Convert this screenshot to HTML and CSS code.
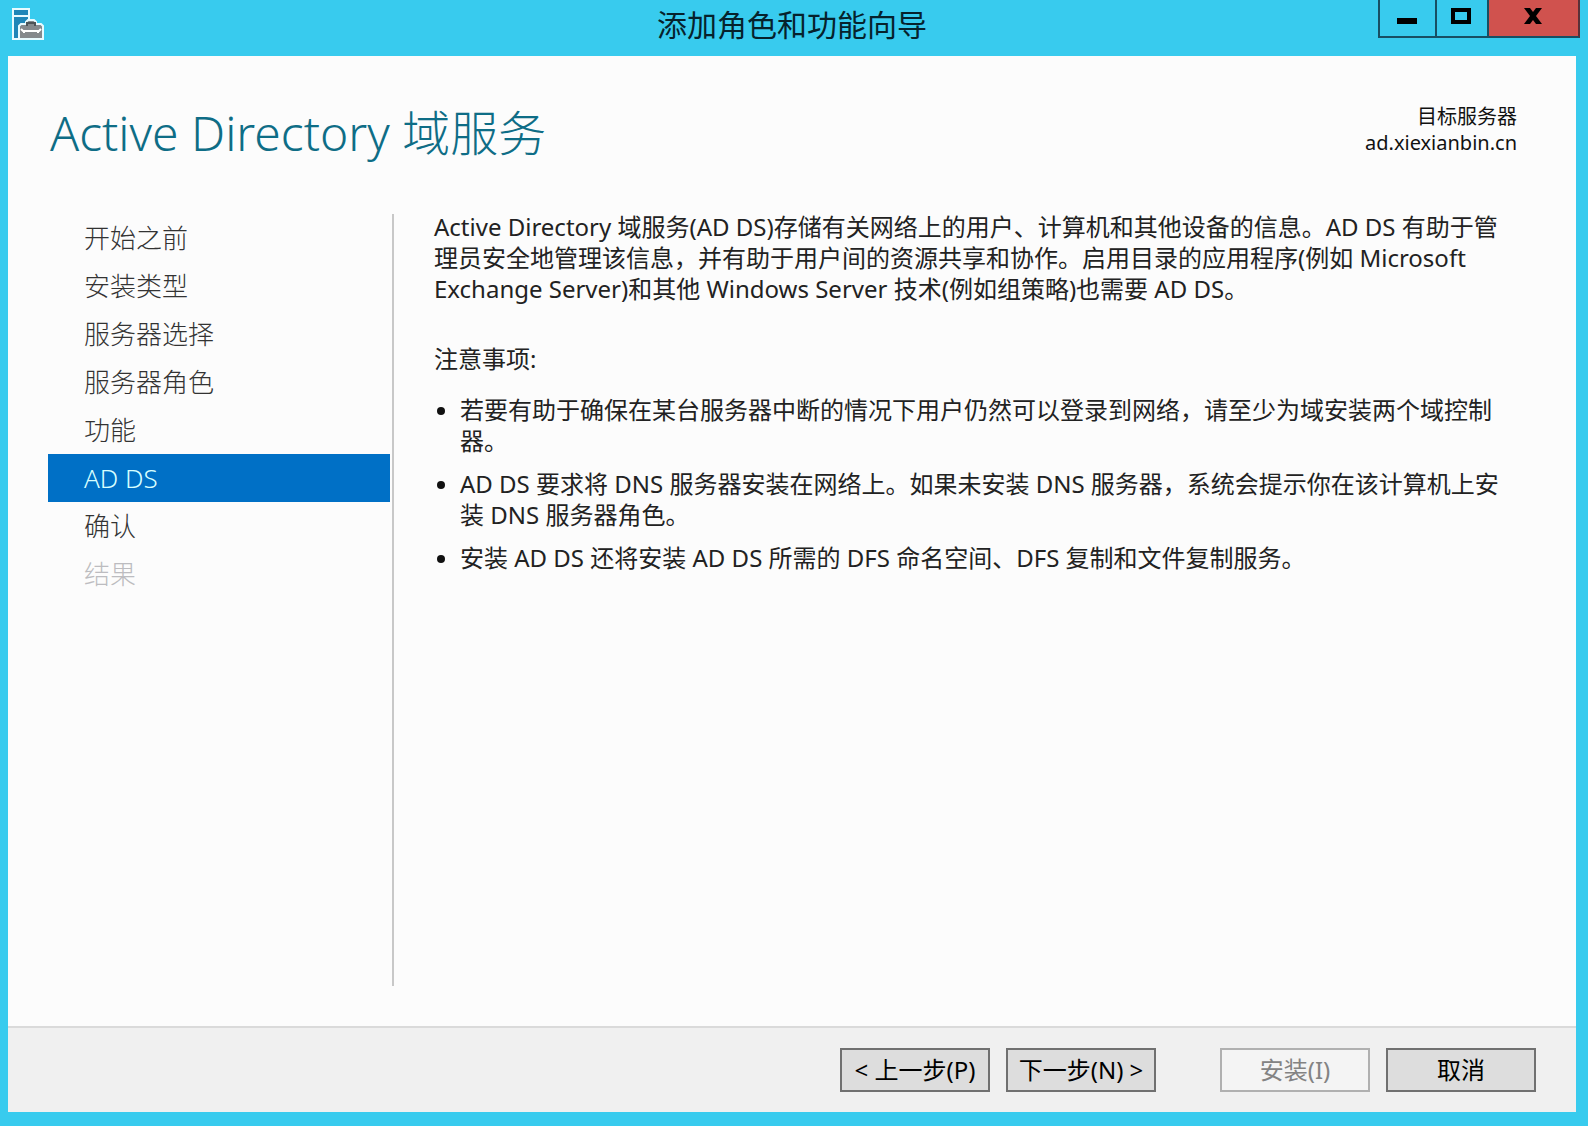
FILE: index.html
```html
<!DOCTYPE html>
<html lang="zh-CN">
<head>
    <meta charset="UTF-8">
    <meta name="viewport" content="width=device-width, initial-scale=1.0">
    <title>添加角色和功能向导</title>
    <link rel="stylesheet" href="styles.css">
</head>
<body>
    <div class="window">
        <header class="titlebar">
            <svg class="app-icon" width="32" height="32" viewBox="0 0 32 32">
                <path d="M1 1H17V31H1Z" fill="#1f86b8"/>
                <path d="M17 14V1H1V31H9M1 8H17" fill="none" stroke="#e8fbff" stroke-width="2"/>
                <path d="M7 31V18L9 16H14V14L16 12H22L24 14V16H29L31 18V31Z" fill="#85898c" stroke="#e8fbff" stroke-width="2"/>
                <path d="M15 18V15H23V18" fill="none" stroke="#4d5356" stroke-width="2"/>
                <path d="M9 21L11 23H27L29 21M12 23V25M26 23V25" fill="none" stroke="#fff" stroke-width="2"/>
            </svg>
            <div class="title">添加角色和功能向导</div>
            <div class="window-buttons">
                <button class="win-btn minimize" aria-label="最小化">
                    <svg width="20" height="16" viewBox="0 0 20 16"><path d="M0 10H20V16H0Z"/></svg>
                </button>
                <button class="win-btn maximize" aria-label="最大化">
                    <svg width="20" height="16" viewBox="0 0 20 16"><path d="M0 0H20V16H0ZM4 4V12H16V4Z" fill-rule="evenodd"/></svg>
                </button>
                <button class="win-btn close" aria-label="关闭">
                    <svg width="18" height="16" viewBox="0 0 18 16"><path d="M0 0H6L9 4L12 0H18L12 8L18 16H12L9 12L6 16H0L6 8Z"/></svg>
                </button>
            </div>
        </header>

        <main class="page">
            <div class="page-header">
                <h1>Active Directory 域服务</h1>
                <div class="target">
                    <div>目标服务器</div>
                    <div>ad.xiexianbin.cn</div>
                </div>
            </div>

            <div class="page-body">
                <nav class="steps">
                    <a class="step" href="#">开始之前</a>
                    <a class="step" href="#">安装类型</a>
                    <a class="step" href="#">服务器选择</a>
                    <a class="step" href="#">服务器角色</a>
                    <a class="step" href="#">功能</a>
                    <a class="step selected" href="#">AD DS</a>
                    <a class="step" href="#">确认</a>
                    <a class="step disabled">结果</a>
                </nav>

                <section class="content">
                    <p>Active Directory 域服务(AD DS)存储有关网络上的用户、计算机和其他设备的信息。AD DS 有助于管理员安全地管理该信息，并有助于用户间的资源共享和协作。启用目录的应用程序(例如 Microsoft Exchange Server)和其他 Windows Server 技术(例如组策略)也需要 AD DS。</p>
                    <h2>注意事项:</h2>
                    <ul>
                        <li>若要有助于确保在某台服务器中断的情况下用户仍然可以登录到网络，请至少为域安装两个域控制器。</li>
                        <li>AD DS 要求将 DNS 服务器安装在网络上。如果未安装 DNS 服务器，系统会提示你在该计算机上安装 DNS 服务器角色。</li>
                        <li>安装 AD DS 还将安装 AD DS 所需的 DFS 命名空间、DFS 复制和文件复制服务。</li>
                    </ul>
                </section>
            </div>
        </main>

        <footer class="footer">
            <div class="btn-group">
                <button class="btn">&lt; 上一步(P)</button>
                <button class="btn">下一步(N) &gt;</button>
            </div>
            <div class="btn-group">
                <button class="btn" disabled>安装(I)</button>
                <button class="btn">取消</button>
            </div>
        </footer>
    </div>
</body>
</html>
```
FILE: styles.css
```css
* {
    box-sizing: border-box;
}

body {
    margin: 0;
    font-family: "Noto Sans", "Noto Sans CJK SC", sans-serif;
    font-size: 24px;
    color: #222;
}

button {
    font-family: inherit;
    border-radius: 0;
}

.window {
    display: flex;
    flex-direction: column;
    min-height: 100vh;
    padding: 0 12px 14px 8px;
    background-color: #38cbee;
}

/* Title bar */
.titlebar {
    display: grid;
    grid-template-columns: 1fr auto 1fr;
    height: 56px;
}

.app-icon {
    margin: 8px 4px;
}

.title {
    font-size: 30px;
    line-height: 50px;
    color: #06222c;
}

.window-buttons {
    display: flex;
    justify-content: flex-end;
    align-items: flex-start;
    margin-right: -4px;
}

.win-btn {
    display: flex;
    justify-content: center;
    height: 38px;
    padding: 8px 2px 0 0;
    border: 2px solid #174f63;
    border-top: 0;
    border-right: 0;
    background-color: transparent;
}

.minimize {
    width: 57px;
}

.maximize {
    width: 52px;
}

.close {
    width: 93px;
    border-right: 2px solid #5a3038;
    background-color: #d0524e;
}

/* Page */
.page {
    flex: 1;
    display: flex;
    flex-direction: column;
    padding: 46px 59px 40px 40px;
    background-color: #fcfcfc;
}

.page-header {
    display: flex;
    justify-content: space-between;
    height: 112px;
}

h1 {
    margin: 0;
    padding-left: 2px;
    font-size: 48px;
    font-weight: 300;
    line-height: 62px;
    color: #0e6d86;
}

.target {
    padding-top: 2px;
    font-size: 20px;
    line-height: 26px;
    text-align: right;
    color: #111;
}

.page-body {
    flex: 1;
    display: flex;
}

.steps {
    flex: 0 0 346px;
    padding-right: 2px;
    border-right: 2px solid #c8c8c8;
}

.step {
    display: block;
    padding-left: 36px;
    font-size: 26px;
    font-weight: 300;
    line-height: 48px;
    color: #333;
    text-decoration: none;
}

.step.selected {
    background-color: #0070c6;
    color: #d8ffff;
}

.step.disabled {
    color: #bcbcc0;
}

.content {
    flex: 1;
    margin-top: -3px;
    padding-left: 40px;
    line-height: 31px;
}

.content p {
    margin: 0 0 39px;
}

.content h2 {
    margin: 0 0 20px;
    font-size: 24px;
    font-weight: 400;
}

.content ul {
    margin: 0;
    padding: 0;
    list-style: none;
}

.content li {
    display: flex;
    gap: 15px;
    margin-bottom: 12px;
    padding-left: 3px;
}

.content li::before {
    content: "";
    flex: none;
    width: 8px;
    height: 8px;
    margin-top: 13px;
    border-radius: 50%;
    background-color: #111;
}

/* Footer */
.footer {
    display: flex;
    justify-content: flex-end;
    gap: 64px;
    padding: 20px 40px;
    border-top: 2px solid #dadada;
    background-color: #f0f0f0;
}

.btn-group {
    display: flex;
    gap: 16px;
}

.btn {
    width: 150px;
    height: 44px;
    padding: 0;
    border: 2px solid #707070;
    background-color: #ddd;
    font-size: 24px;
    line-height: 40px;
    white-space: nowrap;
    color: #000;
}

.btn:disabled {
    border-color: #b0b0b0;
    background-color: #f4f4f4;
    color: #838383;
}
```
